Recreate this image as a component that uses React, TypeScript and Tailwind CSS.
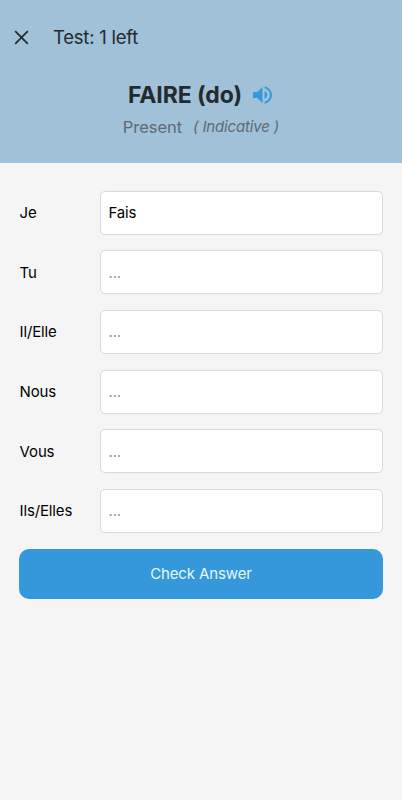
import React from "react";

const rows = [
  { label: "Je", value: "Fais" },
  { label: "Tu", value: "" },
  { label: "Il/Elle", value: "" },
  { label: "Nous", value: "" },
  { label: "Vous", value: "" },
  { label: "Ils/Elles", value: "" },
];

export default function App() {
  return (
    <div className="h-[800px] w-[402px] overflow-hidden bg-[#f5f5f5] font-['Inter',sans-serif] text-black">
      <header className="h-[163px] bg-[#a0c1d8] pt-[22px]">
        <div className="flex h-[30px] items-center pl-[14px] text-[#222a2e]">
          <svg width="15" height="15" viewBox="0 0 15 15" fill="none" stroke="currentColor" strokeWidth="1.7">
            <path d="M1.2 1.2 13.8 13.8M13.8 1.2 1.2 13.8" />
          </svg>
          <span className="ml-6 pt-px text-[18.5px] tracking-[-0.23px]">Test: 1 left</span>
        </div>
        <div className="mt-[28px] flex h-[30px] items-center justify-center gap-[11px] pr-[2px]">
          <h1 className="text-[23px] font-bold tracking-[-0.1px] text-[#252b2d]">FAIRE (do)</h1>
          <svg width="19" height="18" viewBox="3 3 18 18" fill="#3498db" preserveAspectRatio="none">
            <path d="M3 9v6h4l5 5V4L7 9H3zm13.5 3A4.5 4.5 0 0 0 14 7.97v8.05A4.5 4.5 0 0 0 16.5 12zM14 3.23v2.06a7 7 0 0 1 0 13.42v2.06a9 9 0 0 0 0-17.54z" />
          </svg>
        </div>
        <div className="mt-[5px] flex h-6 items-center justify-center gap-[11px] text-[#5f6a71]">
          <span className="text-[16.5px] tracking-[-0.05px]">Present</span>
          <span className="text-[15px] italic tracking-[-0.15px]">( Indicative )</span>
        </div>
      </header>
      <main className="flex flex-col gap-[15.7px] px-[19px] pt-[27.5px]">
        {rows.map((r) => (
          <label key={r.label} className="flex h-11 items-center">
            <span className="w-[81px] pl-[0.6px] pt-[1.5px] text-[15px] tracking-[-0.15px]">{r.label}</span>
            <input defaultValue={r.value} placeholder="..." className="h-11 min-w-0 flex-1 rounded-[5px] border border-[#d9d9d9] bg-white px-[7.5px] text-[15px] tracking-[-0.15px] placeholder:text-[#999999]" />
          </label>
        ))}
        <button className="h-[50px] rounded-[10px] bg-[#3498db] pt-[2px] text-[15px] tracking-[-0.12px] text-[#e6f7ff]">Check Answer</button>
      </main>
    </div>
  );
}
